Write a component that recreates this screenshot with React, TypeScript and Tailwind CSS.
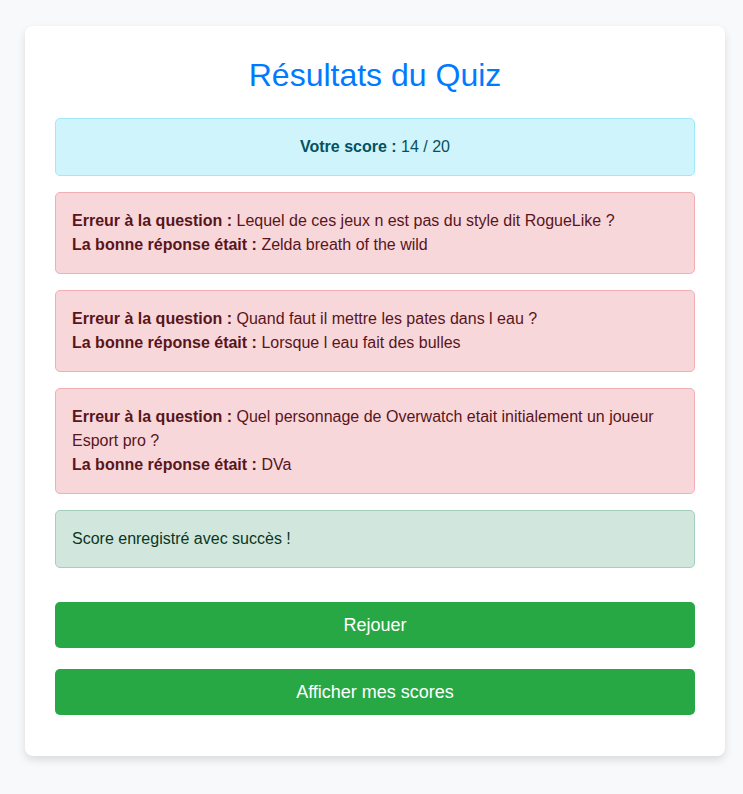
const errors = [
  {
    question: 'Lequel de ces jeux n est pas du style dit RogueLike ?',
    answer: 'Zelda breath of the wild',
  },
  {
    question: 'Quand faut il mettre les pates dans l eau ?',
    answer: 'Lorsque l eau fait des bulles',
  },
  {
    question: 'Quel personnage de Overwatch etait initialement un joueur Esport pro ?',
    answer: 'DVa',
  },
];

export default function App() {
  return (
    <div className="min-h-[794px] bg-[#f8f9fa] pt-[26px] font-['Liberation_Sans',Arial,sans-serif] text-base leading-6">
      <div className="ml-[25px] w-[700px] rounded-lg bg-white px-[30px] pt-[30px] pb-[41px] shadow-[0_4px_8px_rgba(0,0,0,0.12)]">
        <h1 className="mb-6 text-center text-[32px] leading-[38px] text-[#007bff]">Résultats du Quiz</h1>

        {/* Score */}
        <div className="mb-4 rounded-[5px] border border-[#9eeaf9] bg-[#cff4fc] p-4 text-center text-[#055160]">
          <strong>Votre score :</strong> 14 / 20
        </div>

        {/* Erreurs */}
        {errors.map((err, i) => (
          <div key={i} className="mb-4 rounded-[5px] border border-[#f1aeb5] bg-[#f8d7da] p-4 text-[#58151c]">
            <strong>Erreur à la question :</strong> {err.question}
            <br />
            <strong>La bonne réponse était :</strong> {err.answer}
          </div>
        ))}

        <div className="rounded-[5px] border border-[#a3cfbb] bg-[#d1e7dd] p-4 text-[#0a3622]">
          Score enregistré avec succès !
        </div>

        <div className="mt-[34px] flex flex-col gap-[21px]">
          <button className="h-[46px] w-full rounded-[5px] bg-[#28a745] text-[18px] text-white">Rejouer</button>
          <button className="h-[46px] w-full rounded-[5px] bg-[#28a745] text-[18px] text-white">Afficher mes scores</button>
        </div>
      </div>
    </div>
  );
}
